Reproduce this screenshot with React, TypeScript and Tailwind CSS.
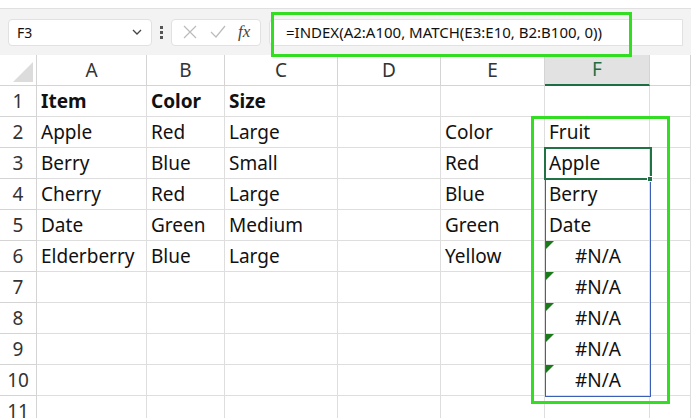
import React from "react"

const cols = [
  { k: "A", w: 110 },
  { k: "B", w: 78 },
  { k: "C", w: 113 },
  { k: "D", w: 103 },
  { k: "E", w: 104 },
  { k: "F", w: 105 },
  { k: "", w: 41 },
]

const data: Record<number, string[]> = {
  1: ["Item", "Color", "Size", "", "", ""],
  2: ["Apple", "Red", "Large", "", "Color", "Fruit"],
  3: ["Berry", "Blue", "Small", "", "Red", "Apple"],
  4: ["Cherry", "Red", "Large", "", "Blue", "Berry"],
  5: ["Date", "Green", "Medium", "", "Green", "Date"],
  6: ["Elderberry", "Blue", "Large", "", "Yellow", "#N/A"],
  7: ["", "", "", "", "", "#N/A"],
  8: ["", "", "", "", "", "#N/A"],
  9: ["", "", "", "", "", "#N/A"],
  10: ["", "", "", "", "", "#N/A"],
  11: ["", "", "", "", "", ""],
}

export default function App() {
  return (
    <div className="relative w-[691px] h-[418px] overflow-hidden bg-white text-[#111]" style={{ fontFamily: '"Noto Sans", "Open Sans", sans-serif' }}>
      <div className="h-[9px] bg-white border-b border-[#e0e0e0]" />
      <div className="h-[46px] bg-[#f3f3f3] flex items-center px-2 gap-2">
        <div className="w-[144px] h-[27px] bg-white rounded border border-[#e1e1e1] flex items-center justify-between px-2 text-[14px]">
          <span>F3</span>
          <svg width="12" height="12" viewBox="0 0 12 12"><path d="M2 4l4 4 4-4" fill="none" stroke="#444" strokeWidth="1.3" /></svg>
        </div>
        <div className="flex flex-col gap-[2px]">
          <span className="w-[3px] h-[3px] bg-[#555]" /><span className="w-[3px] h-[3px] bg-[#555]" /><span className="w-[3px] h-[3px] bg-[#555]" />
        </div>
        <div className="w-[90px] h-[27px] bg-white rounded border border-[#e1e1e1] flex items-center justify-around px-1">
          <svg width="16" height="16" viewBox="0 0 16 16"><path d="M2 2l12 12M14 2L2 14" stroke="#bbb" strokeWidth="1.2" /></svg>
          <svg width="18" height="16" viewBox="0 0 18 16"><path d="M2 8l5 5L16 2" fill="none" stroke="#bbb" strokeWidth="1.2" /></svg>
          <span className="italic text-[17px] text-[#444]" style={{ fontFamily: '"Liberation Serif", serif' }}>fx</span>
        </div>
        <div className="flex-1 h-[27px] bg-white rounded-l border border-[#e1e1e1] flex items-center pl-4 text-[15px]">
          =INDEX(A2:A100, MATCH(E3:E10, B2:B100, 0))
        </div>
      </div>
      <div className="flex h-[31px] bg-white">
        <div className="w-[37px] border-r border-b border-[#d4d4d4] relative">
          <svg className="absolute right-[3px] bottom-[3px]" width="20" height="20" viewBox="0 0 20 20"><path d="M20 0L20 20L0 20Z" fill="#dcdcdc" /></svg>
        </div>
        {cols.map((c, i) => (
          <div key={i} style={{ width: c.w }} className={`shrink-0 flex items-center justify-center text-[19px] border-r border-[#d4d4d4] ${c.k === "F" ? "bg-[#e2e2e2] text-[#1e6e43] border-b-2 border-b-[#1e6e43]" : "border-b text-[#333]"}`}>{c.k}</div>
        ))}
      </div>
      {Object.keys(data).map(r => {
        const n = Number(r)
        return (
          <div key={r} className="flex h-[31px]">
            <div className="w-[37px] shrink-0 border-r border-b border-[#d4d4d4] flex items-center justify-center text-[19px] text-[#333]">{n}</div>
            {cols.map((c, i) => {
              const v = data[n][i] ?? ""
              const na = v === "#N/A"
              return (
                <div key={i} style={{ width: c.w }} className={`relative shrink-0 border-r border-b border-[#dedede] flex items-center text-[19px] ${na ? "justify-end pr-[28px]" : "pl-[4px]"} ${n === 1 ? "font-bold" : ""}`}>
                  {na && <span className="absolute left-0 top-0 w-0 h-0 border-t-[9px] border-r-[9px] border-t-[#1a7a1a] border-r-transparent" />}
                  {v}
                </div>
              )
            })}
          </div>
        )
      })}
      {/* F3:F10 outline */}
      <div className="absolute left-[545px] top-[148px] w-[106px] h-[249px] border border-[#3b5fb5]" />
      <div className="absolute left-[544px] top-[147px] w-[108px] h-[33px] border-2 border-[#217346]" />
      <div className="absolute left-[647px] top-[176px] w-[6px] h-[6px] bg-[#217346] border border-white" />
      {/* highlight boxes */}
      <div className="absolute left-[271px] top-[12px] w-[361px] h-[45px] border-[3px] border-[#33dd22]" />
      <div className="absolute left-[531px] top-[116px] w-[139px] h-[288px] border-[3px] border-[#33dd22]" />
    </div>
  )
}
